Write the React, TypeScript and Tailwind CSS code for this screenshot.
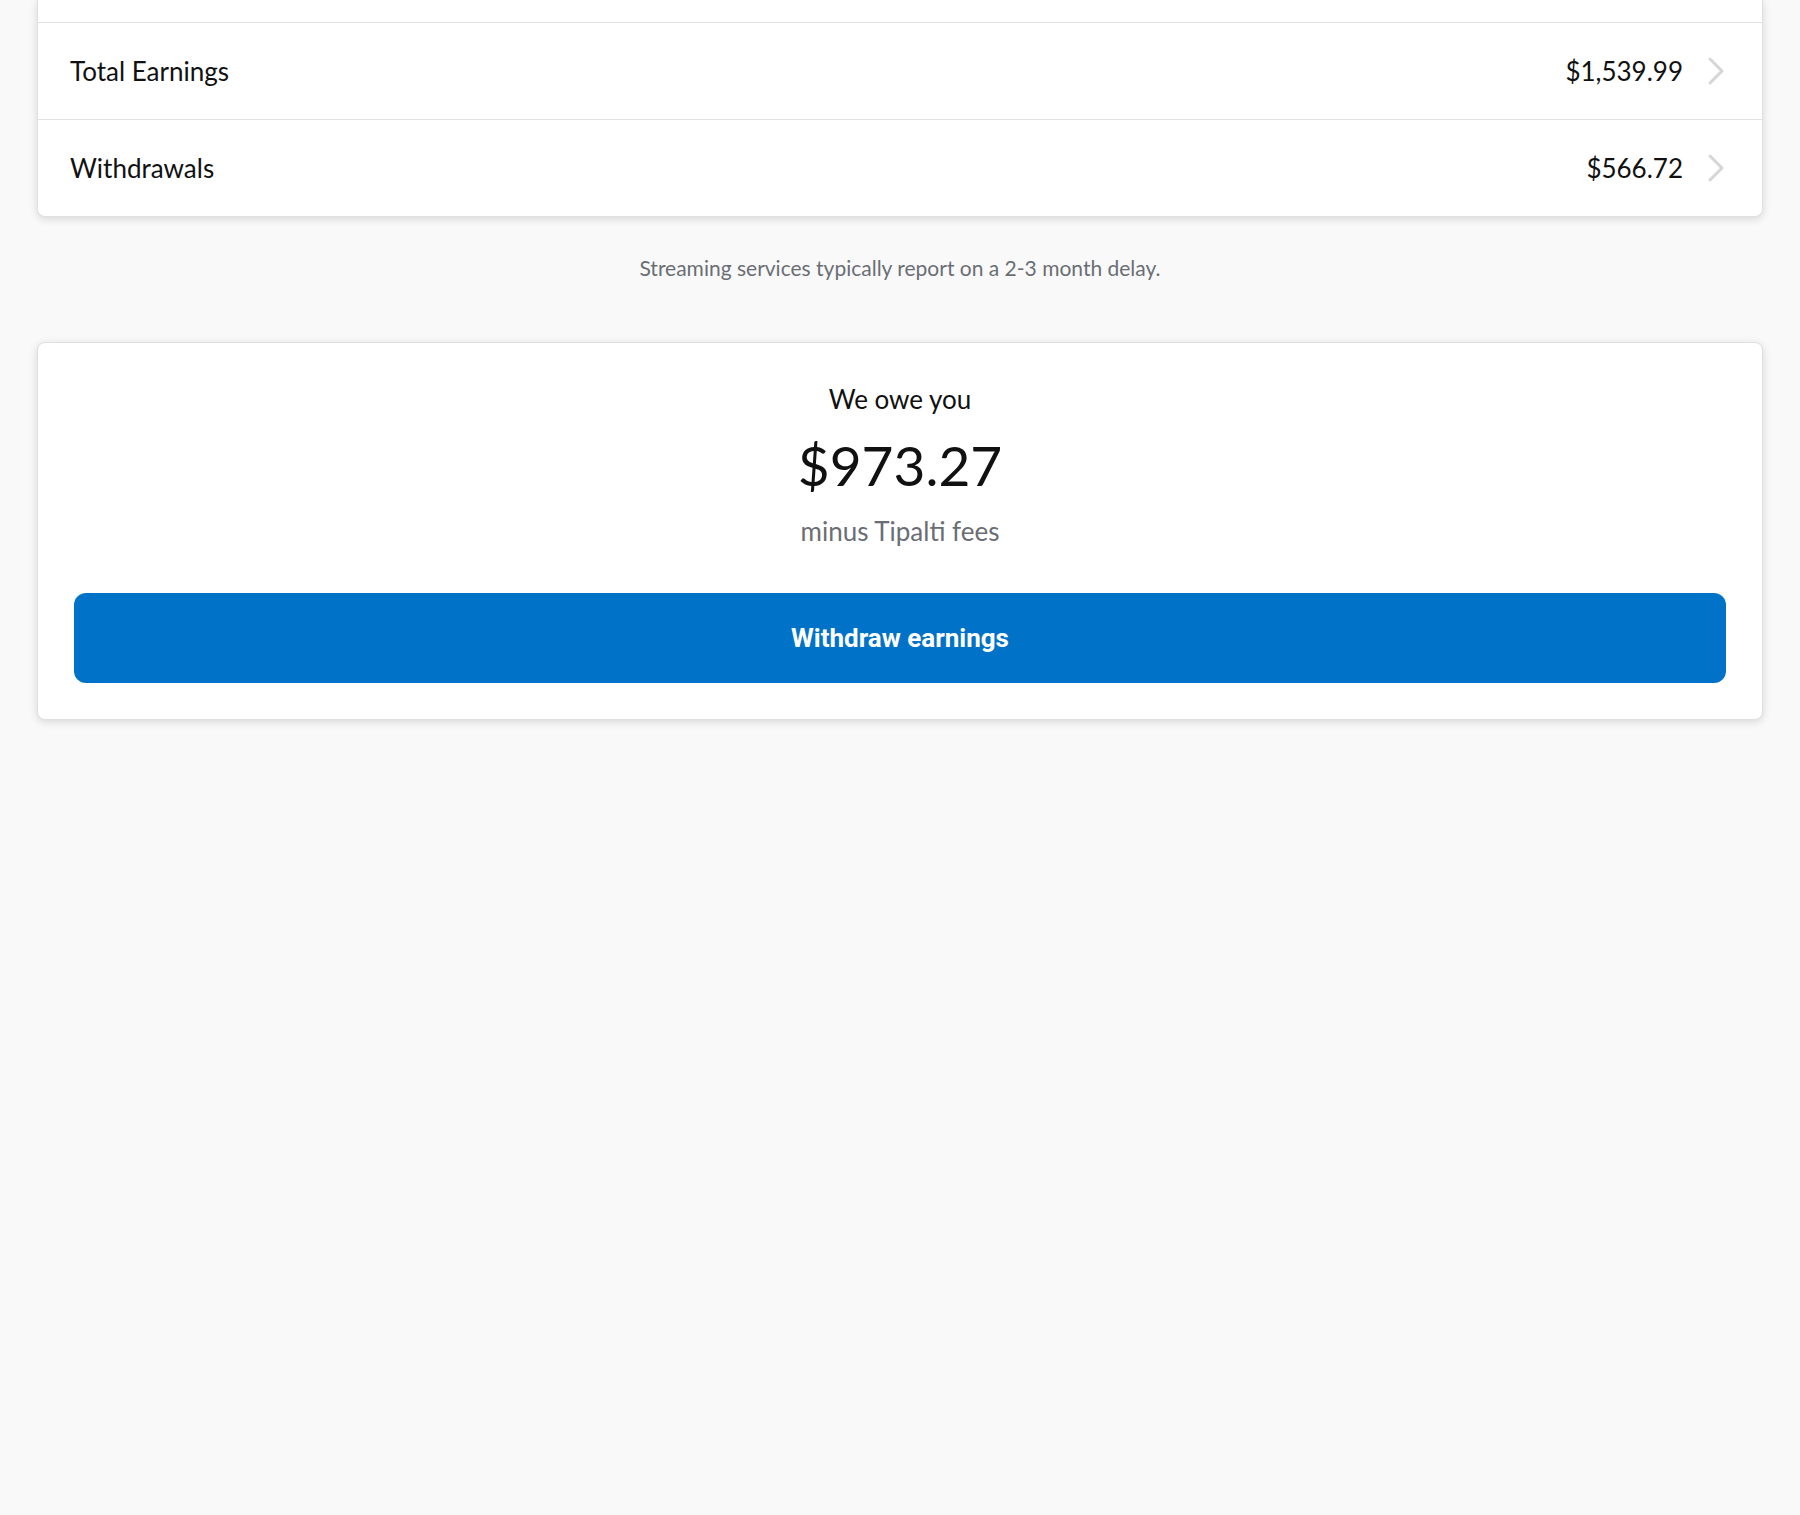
type Row = { label: string; amount: string }

const rows: Row[] = [
  { label: 'Total Earnings', amount: '$1,539.99' },
  { label: 'Withdrawals', amount: '$566.72' },
]

const lato = { fontFamily: 'Lato, "Open Sans", sans-serif' }

function Chevron() {
  return (
    <svg width="18" height="30" viewBox="0 0 18 30" fill="none" className="shrink-0">
      <path d="M3 3 L15 15 L3 27" stroke="#d6d6d6" strokeWidth="3" strokeLinecap="round" strokeLinejoin="round" />
    </svg>
  )
}

function SummaryRow({ row }: { row: Row }) {
  return (
    <div className="flex h-[97px] items-center justify-between border-t border-[#e3e3e3] pl-[32px] pr-[37px]">
      <span className="text-[26px] text-[#111]">{row.label}</span>
      <div className="flex items-center gap-[24px]">
        <span className="text-[26px] text-[#111]">{row.amount}</span>
        <Chevron />
      </div>
    </div>
  )
}

export default function App() {
  return (
    <div className="min-h-[1515px] bg-[#f9f9f9] px-[37px]" style={lato}>
      {/* Earnings summary, scrolled so the top is off screen */}
      <div className="overflow-hidden rounded-b-[8px] border-x border-b border-[#e0e0e0] bg-white shadow-[0_2px_8px_rgba(0,0,0,0.14)]">
        <div className="h-[22px]" />
        {rows.map((r) => (
          <SummaryRow key={r.label} row={r} />
        ))}
      </div>

      <p className="mt-[37px] text-center text-[21px] leading-[28px] text-[#6a6e74]">
        Streaming services typically report on a 2-3 month delay.
      </p>

      {/* Balance card */}
      <div className="mt-[60px] rounded-[8px] border border-[#e0e0e0] bg-white p-[36px] shadow-[0_2px_8px_rgba(0,0,0,0.14)]">
        <div className="flex flex-col items-center">
          <p className="mt-[4px] text-[26px] leading-[32px] text-[#111]">We owe you</p>
          <p className="mt-[20px] text-[55px] leading-[60px] text-[#111]">$973.27</p>
          <p className="mt-[20px] text-[26px] leading-[32px] text-[#6a6e74]">minus Tipalti fees</p>
        </div>
        <button
          className="mt-[46px] flex h-[90px] w-full items-center justify-center rounded-[12px] bg-[#0073c8] text-[26px] font-bold text-white"
          style={{ fontFamily: 'Roboto, sans-serif' }}
        >
          Withdraw earnings
        </button>
      </div>
    </div>
  )
}
